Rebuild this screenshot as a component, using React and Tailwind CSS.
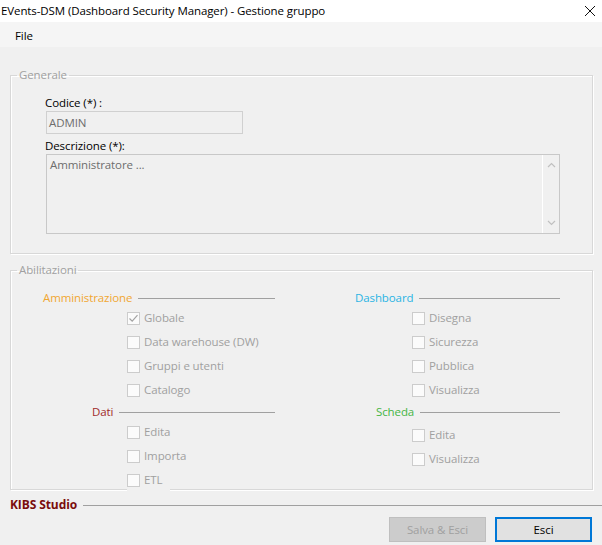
import React from "react";

const F = { fontFamily: '"Segoe UI", "Open Sans", "Noto Sans", sans-serif', letterSpacing: "-0.1px" };

function Check({ checked }) {
  return (
    <span className="w-[13px] h-[13px] border border-[#cccccc] bg-[#fbfbfb] flex items-center justify-center shrink-0">
      {checked && (
        <svg width="11" height="11" viewBox="0 0 11 11">
          <path d="M1.5 5.5 L4.2 8.2 L9.5 2.2" stroke="#a3a3a3" strokeWidth="1.2" fill="none" />
        </svg>
      )}
    </span>
  );
}

function Row({ label, checked, indent, extra = "" }) {
  return (
    <div className={`h-[24px] flex items-center ${indent} ${extra}`}>
      <Check checked={checked} />
      <span className="ml-[4px] text-[#a0a0a0]">{label}</span>
    </div>
  );
}

function Header({ label, color, offset }) {
  return (
    <div className={`h-[16px] flex items-center ${offset}`}>
      <span className={color}>{label}</span>
      <span className="flex-1 h-px bg-[#a0a0a0] ml-[6px]" />
    </div>
  );
}

export default function App() {
  return (
    <div className="w-[602px] h-[545px] bg-[#f0f0f0] text-[11.5px] leading-[16px] text-black overflow-hidden flex flex-col" style={F}>
      {/* title bar */}
      <div className="h-[22px] bg-white flex items-center justify-between shrink-0">
        <span className="pl-[1px]">EVents-DSM (Dashboard Security Manager) - Gestione gruppo</span>
        <svg width="12" height="12" viewBox="0 0 12 12" className="mr-[6px]">
          <path d="M1 1 L11 11 M11 1 L1 11" stroke="#111" strokeWidth="1" />
        </svg>
      </div>
      {/* menu */}
      <div className="h-[25px] bg-[#f5f5f5] flex items-center pl-[15px] pt-[3px] shrink-0">
        <span>File</span>
      </div>

      {/* Generale */}
      <fieldset className="mt-[20px] mx-[10px] w-[583px] border border-[#d8d8d8] shadow-[1px_1px_0_#ffffff,inset_1px_1px_0_#ffffff]">
        <legend className="ml-[6px] px-[2px] text-[#a0a0a0]">Generale</legend>
        <div className="pl-[34px] pb-[19px]">
          <div className="pt-[12px]">Codice (*) :</div>
          <div className="ml-[1px] w-[197px] h-[23px] border border-[#d0d0d0] bg-[#f0f0f0] flex items-center pl-[2px] text-[#6d6d6d]">ADMIN</div>
          <div className="mt-[4px]">Descrizione (*):</div>
          <div className="ml-[1px] w-[514px] h-[80px] border border-[#c8c8c8] bg-[#f0f0f0] flex">
            <div className="flex-1 pl-[3px] pt-[2px] text-[#6d6d6d]">Amministratore ...</div>
            <div className="w-[17px] border-l border-white flex flex-col items-center justify-between py-[7px]">
              <svg width="9" height="6" viewBox="0 0 9 6"><path d="M1 5 L4.5 1.5 L8 5" stroke="#c0c0c0" strokeWidth="1.2" fill="none" /></svg>
              <svg width="9" height="6" viewBox="0 0 9 6"><path d="M1 1 L4.5 4.5 L8 1" stroke="#c0c0c0" strokeWidth="1.2" fill="none" /></svg>
            </div>
          </div>
        </div>
      </fieldset>

      {/* Abilitazioni */}
      <fieldset className="mt-[8px] mx-[10px] w-[583px] border border-[#d8d8d8] shadow-[1px_1px_0_#ffffff,inset_1px_1px_0_#ffffff]">
        <legend className="ml-[6px] px-[2px] text-[#a0a0a0]">Abilitazioni</legend>
        <div className="pl-[32px] pt-[12px] flex">
          <div className="w-[232px] flex flex-col -mb-[3px]">
            <Header label="Amministrazione" color="text-[#f0a732]" offset="" />
            <Row label="Globale" checked indent="ml-[84px]" />
            <Row label="Data warehouse (DW)" indent="ml-[84px]" />
            <Row label="Gruppi e utenti" indent="ml-[84px]" />
            <Row label="Catalogo" indent="ml-[84px]" />
            <div className="mt-[2px]">
              <Header label="Dati" color="text-[#a02a2a]" offset="ml-[49px]" />
            </div>
            <Row label="Edita" indent="ml-[84px]" />
            <Row label="Importa" indent="ml-[84px]" />
            <Row label="ETL" indent="ml-[84px]" extra="relative z-10 bg-[#f0f0f0] w-[43px]" />
          </div>
          <div className="ml-[80px] w-[205px] flex flex-col">
            <Header label="Dashboard" color="text-[#2ab4e4]" offset="" />
            <Row label="Disegna" indent="ml-[57px]" />
            <Row label="Sicurezza" indent="ml-[57px]" />
            <Row label="Pubblica" indent="ml-[57px]" />
            <Row label="Visualizza" indent="ml-[57px]" />
            <div className="mt-[2px]">
              <Header label="Scheda" color="text-[#45b545]" offset="ml-[21px]" />
            </div>
            <div className="mt-[3px]">
              <Row label="Edita" indent="ml-[57px]" />
              <Row label="Visualizza" indent="ml-[57px]" />
            </div>
          </div>
        </div>
      </fieldset>

      {/* KIBS Studio */}
      <div className="mt-[7px] h-[16px] flex items-center pl-[10px]">
        <span className="font-bold text-[#7a0c0c] text-[12px]">KIBS Studio</span>
        <span className="flex-1 h-px bg-[#a0a0a0] ml-[6px]" />
      </div>

      {/* buttons */}
      <div className="mt-[4px] flex justify-end gap-[9px] pr-[10px]">
        <div className="w-[97px] h-[25px] bg-[#cccccc] border border-[#bfbfbf] flex items-center justify-center text-[#a0a0a0]">Salva &amp; Esci</div>
        <div className="w-[97px] h-[25px] bg-[#e1e1e1] border-2 border-[#0078d7] flex items-center justify-center">Esci</div>
      </div>
    </div>
  );
}
